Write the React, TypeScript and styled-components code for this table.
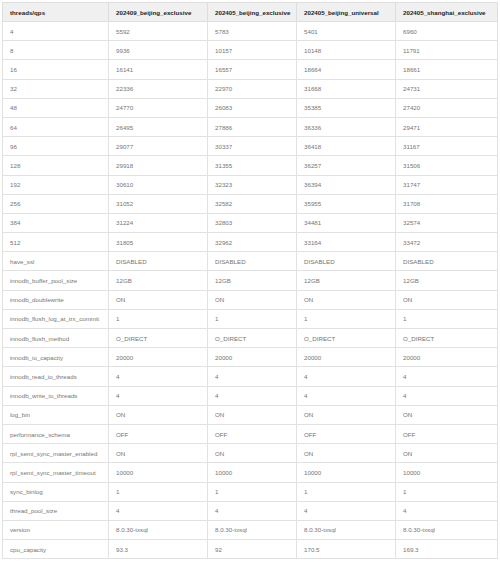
import styled, { createGlobalStyle } from 'styled-components';

const GlobalStyle = createGlobalStyle`
  html, body {
    margin: 0;
    padding: 0;
    background: #ffffff;
  }
  body {
    font-family: "Liberation Sans", Arial, sans-serif;
  }
`;

const columns = [
  'threads/qps',
  '202409_beijing_exclusive',
  '202405_beijing_exclusive',
  '202405_beijing_universal',
  '202405_shanghai_exclusive',
];

// 각 컬럼 너비 (px)
const widths = [106, 99, 89, 99, 102];

const rows: string[][] = [
  ['4', '5592', '5783', '5401', '6960'],
  ['8', '9936', '10157', '10148', '11791'],
  ['16', '16141', '16557', '18664', '18661'],
  ['32', '22336', '22970', '31668', '24731'],
  ['48', '24770', '26083', '35385', '27420'],
  ['64', '26495', '27886', '36336', '29471'],
  ['96', '29077', '30337', '36418', '31167'],
  ['128', '29918', '31355', '36257', '31506'],
  ['192', '30610', '32323', '36394', '31747'],
  ['256', '31052', '32582', '35955', '31708'],
  ['384', '31224', '32803', '34481', '32574'],
  ['512', '31805', '32962', '33164', '33472'],
  ['have_ssl', 'DISABLED', 'DISABLED', 'DISABLED', 'DISABLED'],
  ['innodb_buffer_pool_size', '12GB', '12GB', '12GB', '12GB'],
  ['innodb_doublewrite', 'ON', 'ON', 'ON', 'ON'],
  ['innodb_flush_log_at_trx_commit', '1', '1', '1', '1'],
  ['innodb_flush_method', 'O_DIRECT', 'O_DIRECT', 'O_DIRECT', 'O_DIRECT'],
  ['innodb_io_capacity', '20000', '20000', '20000', '20000'],
  ['innodb_read_io_threads', '4', '4', '4', '4'],
  ['innodb_write_io_threads', '4', '4', '4', '4'],
  ['log_bin', 'ON', 'ON', 'ON', 'ON'],
  ['performance_schema', 'OFF', 'OFF', 'OFF', 'OFF'],
  ['rpl_semi_sync_master_enabled', 'ON', 'ON', 'ON', 'ON'],
  ['rpl_semi_sync_master_timeout', '10000', '10000', '10000', '10000'],
  ['sync_binlog', '1', '1', '1', '1'],
  ['thread_pool_size', '4', '4', '4', '4'],
  ['version', '8.0.30-txsql', '8.0.30-txsql', '8.0.30-txsql', '8.0.30-txsql'],
  ['cpu_capacity', '93.3', '92', '170.5', '169.3'],
];

const Page = styled.div`
  padding: 2px 0 0 2px;
`;

const Table = styled.table`
  border-collapse: collapse;
  table-layout: fixed;
  width: 495px;
  border: 1px solid #dedede;
`;

const HeadCell = styled.th<{ $w: number }>`
  width: ${(p) => p.$w}px;
  height: 19px;
  padding: 0 0 0 7px;
  box-sizing: border-box;
  background: #f0f0f0;
  border: 1px solid #dedede;
  color: #1c1c1c;
  font-size: 6.2px;
  font-weight: 700;
  text-align: left;
  white-space: nowrap;
  overflow: hidden;
`;

const Cell = styled.td`
  height: 19.2px;
  padding: 0 0 0 7px;
  box-sizing: border-box;
  border: 1px solid #e2e2e2;
  color: #767676;
  font-size: 6.2px;
  white-space: nowrap;
  overflow: hidden;
`;

const App = () => {
  return (
    <>
      <GlobalStyle />
      <Page>
        <Table>
          <thead>
            <tr>
              {columns.map((c, i) => (
                <HeadCell key={c} $w={widths[i]}>
                  {c}
                </HeadCell>
              ))}
            </tr>
          </thead>
          <tbody>
            {rows.map((r) => (
              <tr key={r[0]}>
                {r.map((v, i) => (
                  <Cell key={i}>{v}</Cell>
                ))}
              </tr>
            ))}
          </tbody>
        </Table>
      </Page>
    </>
  );
};

export default App;
